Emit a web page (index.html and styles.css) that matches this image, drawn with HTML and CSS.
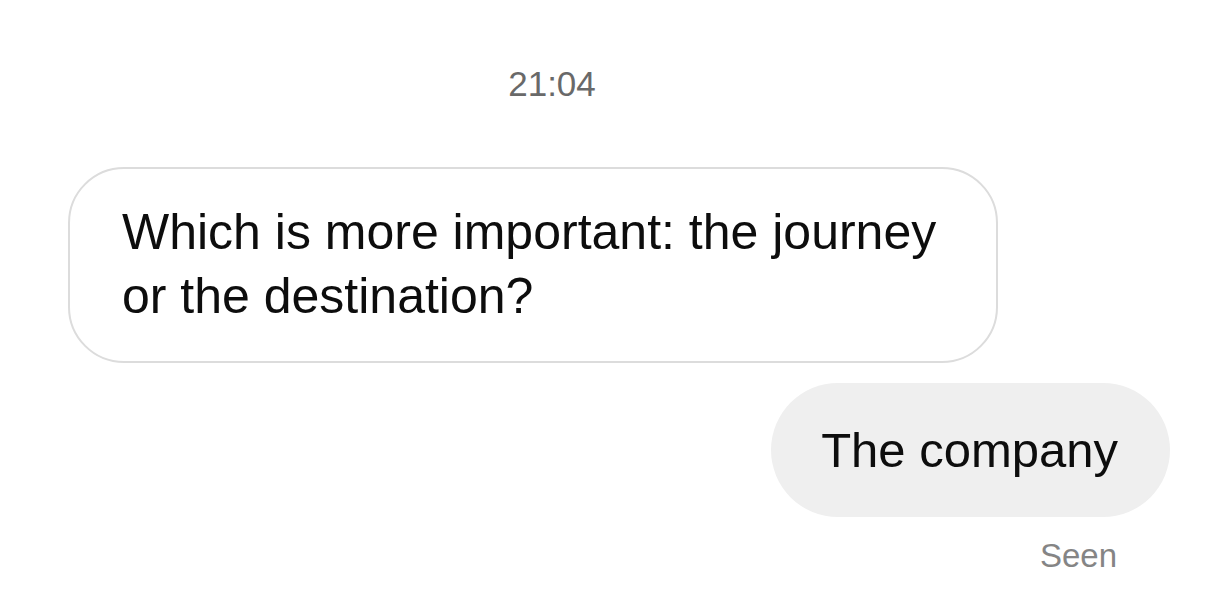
FILE: index.html
```html
<!DOCTYPE html>
<html lang="en">
<head>
<meta charset="utf-8">
<title>Chat</title>
<link rel="stylesheet" href="styles.css">
</head>
<body>
<main class="thread">
  <div class="timestamp">21:04</div>
  <div class="row row-in">
    <div class="bubble bubble-in">Which is more important: the journey or the destination?</div>
  </div>
  <div class="row row-out">
    <div class="bubble bubble-out">The company</div>
  </div>
  <div class="status">Seen</div>
</main>
</body>
</html>
```
FILE: styles.css
```css
html, body {
  margin: 0;
  padding: 0;
  background: #ffffff;
}

body {
  font-family: "Liberation Sans", Arial, "Helvetica Neue", sans-serif;
  color: #0d0d0d;
  width: 1206px;
  height: 592px;
  overflow: hidden;
}

.thread {
  display: flex;
  flex-direction: column;
  padding: 64px 36px 0 68px;
}

.timestamp {
  align-self: center;
  margin-right: 134px;
  font-size: 35px;
  line-height: 40px;
  color: #696969;
}

.row {
  display: flex;
}

.row-in {
  margin-top: 63px;
  justify-content: flex-start;
}

.row-out {
  margin-top: 20px;
  justify-content: flex-end;
}

.bubble {
  box-sizing: border-box;
  font-size: 50px;
  line-height: 64px;
}

.bubble-in {
  width: 930px;
  padding: 31px 52px 33px 52px;
  border: 2px solid #dcdcdc;
  border-radius: 56px;
  background: #ffffff;
}

.bubble-out {
  height: 134px;
  display: flex;
  align-items: center;
  padding: 0 52px 0 50px;
  border-radius: 67px;
  background: #efefef;
  font-size: 49px;
}

.status {
  align-self: flex-end;
  margin-top: 21px;
  margin-right: 53px;
  font-size: 33px;
  line-height: 36px;
  color: #858585;
}
```
